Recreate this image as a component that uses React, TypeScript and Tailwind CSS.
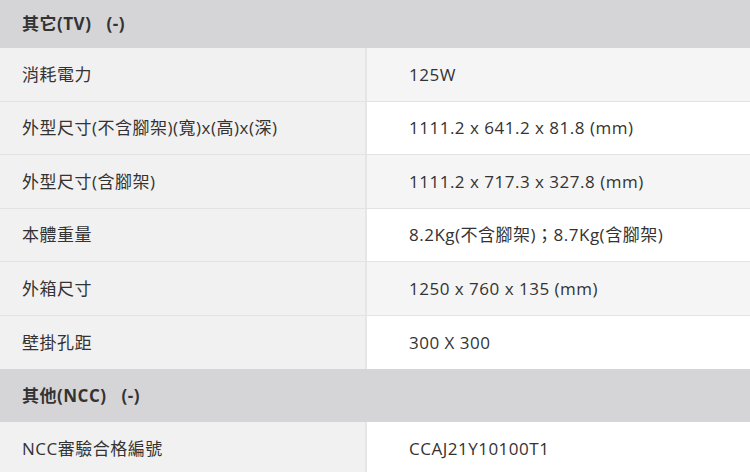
const font = { fontFamily: '"Open Sans", "Noto Sans CJK TC", sans-serif' };

type Row = { label: string; value: string; shade: boolean };

const tvRows: Row[] = [
  { label: '消耗電力', value: '125W', shade: true },
  { label: '外型尺寸(不含腳架)(寬)x(高)x(深)', value: '1111.2 x 641.2 x 81.8 (mm)', shade: false },
  { label: '外型尺寸(含腳架)', value: '1111.2 x 717.3 x 327.8 (mm)', shade: true },
  { label: '本體重量', value: '8.2Kg(不含腳架)；8.7Kg(含腳架)', shade: false },
  { label: '外箱尺寸', value: '1250 x 760 x 135 (mm)', shade: true },
  { label: '壁掛孔距', value: '300 X 300', shade: false },
];

const nccRows: Row[] = [{ label: 'NCC審驗合格編號', value: 'CCAJ21Y10100T1', shade: false }];

function SectionHeader({ title, tall }: { title: string; tall?: boolean }) {
  return (
    <div
      className={`flex items-center gap-[15px] bg-[#d5d5d7] pl-[22px] text-[17px] font-bold text-[#333] ${
        tall ? 'h-[53px]' : 'h-[48px]'
      }`}
    >
      <span>{title}</span>
      <span>(-)</span>
    </div>
  );
}

function SpecRow({ row, last }: { row: Row; last?: boolean }) {
  return (
    <div className={`flex h-[53.5px] ${last ? '' : 'border-b-[1.5px] border-[#e3e3e3]'}`}>
      <div className="flex w-[367px] items-center border-r-2 border-[#e6e6e6] bg-[#f1f1f1] pl-[22px]">
        {row.label}
      </div>
      <div className={`flex flex-1 items-center pl-[42px] ${row.shade ? 'bg-[#f5f5f5]' : 'bg-white'}`}>
        {row.value}
      </div>
    </div>
  );
}

export default function App() {
  return (
    <div
      className="w-[750px] h-[472px] overflow-hidden bg-white text-[17px] tracking-[0.5px] text-[#333]"
      style={font}
    >
      <SectionHeader title="其它(TV)" />
      {tvRows.map((r, i) => (
        <SpecRow key={r.label} row={r} last={i === tvRows.length - 1} />
      ))}
      <SectionHeader title="其他(NCC)" tall />
      {nccRows.map((r) => (
        <SpecRow key={r.label} row={r} last />
      ))}
    </div>
  );
}
